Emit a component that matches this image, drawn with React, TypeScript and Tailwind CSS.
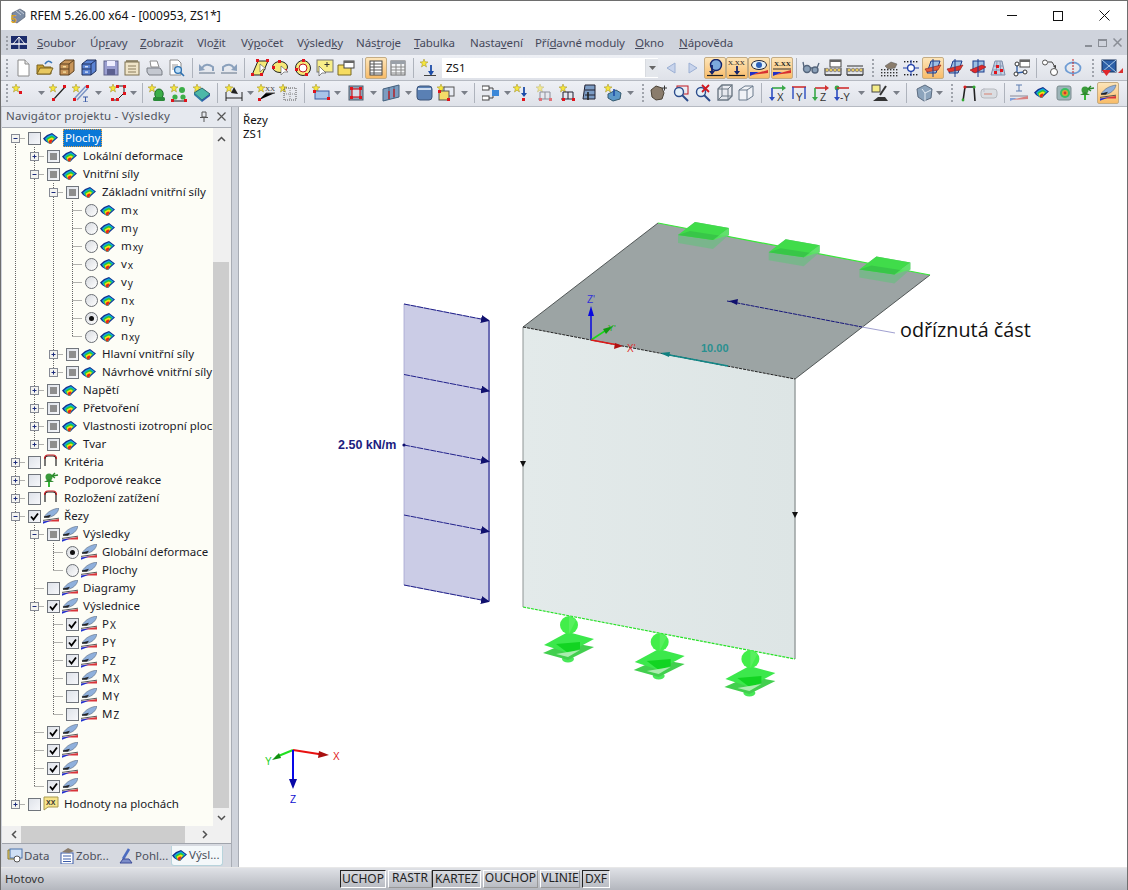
import type { ReactNode } from "react";

const font = { fontFamily: '"Noto Sans", "Open Sans", sans-serif' };

const star = <polygon points="4,0 5,2.8 8,3 5.6,4.8 6.5,8 4,6.2 1.5,8 2.4,4.8 0,3 3,2.8" fill="#f6e63a" stroke="#9a8a20" strokeWidth=".5" />;
const rd = (x: number, y: number) => <rect x={x} y={y} width="3" height="3" fill="#e0141c" />;

const rainbow = (
  <g>
    <polygon points="0,5.5 4,2 9,0 15,4.5 11,8 8,11 6,10.5 2,8" fill="#12308c" />
    <polygon points="2,5.5 5,3 9,1.2 13.6,4.6 10,7.6 8,10.6 6,10 3,7.6" fill="#10a8e0" />
    <polygon points="3.4,6 6,4 9,2.8 12.2,5 9.4,7.6 8,10.6 6,10 4,7.6" fill="#28c838" />
    <polygon points="4.6,6.8 7,5.2 9,4.4 11,5.8 9,8 8,10.6 6,10 5,8" fill="#f4e418" />
    <polygon points="5.6,8 7.5,6.8 9,6.4 9.6,7.2 8,10.6 6,10" fill="#e82818" />
  </g>
);

const section = (
  <g>
    <path d="M1 9 C5 3 10 1 16 0 C15 5 11 8.5 5 9.6 Z" fill="#8fb0dc" stroke="#5a6a80" strokeWidth=".6" />
    <path d="M1 8.6 L8 6.8 L6 9.6 L1 9.8Z" fill="#222" />
    <path d="M0 12.4 L16 10.2" stroke="#444" strokeWidth=".9" />
    <polygon points="0,13.4 16,11 16,13.4" fill="#d8343a" />
    <polygon points="0,13.4 9,12.2 0,15.8" fill="#2030d0" />
  </g>
);

const arch = <path d="M2 12 V5 Q2 2 5 2 H10 Q13 2 13 5 V12" fill="none" stroke="#222" strokeWidth="1.2" />;
const archRed = <path d="M1.5 5 Q1.5 1 5 1 H10 Q13.5 1 13.5 5" fill="none" stroke="#c81e24" strokeWidth="1.2" />;

const support = (
  <g>
    <circle cx="6" cy="5" r="3.5" fill="#3a9a3a" />
    <path d="M1 10 L11 10 L6 7Z" fill="#2f8a2f" />
    <path d="M6 10 V15" stroke="#38b838" strokeWidth="2" />
    <path d="M9 4 L15 3 M12 1 L9 4 L12 6" stroke="#2a8a2a" strokeWidth="1.3" fill="none" />
  </g>
);

const xxNote = (
  <g>
    <path d="M1 1 H15 V11 H5 L1 14 Z" fill="#f7e48a" stroke="#a89a50" />
    <text x="3" y="8.5" fontSize="7" fontFamily="Liberation Sans" fontWeight="700" fill="#333">XX</text>
  </g>
);

const frame = (c: string) => (
  <g stroke={c} fill="none" strokeWidth="1">
    <path d="M2 15 H16 M4 8 V15 M9 8 V15 M14 8 V15 M4 8 H14" />
  </g>
);

const balls = (
  <g>
    <path d="M1 16 H17" stroke="#222" strokeWidth="1.4" />
    <path d="M1 9 V16 M17 9 V16" stroke="#333" />
    {[3, 7, 11, 15].map((x) => (
      <circle key={x} cx={x} cy="11" r="1.8" fill="#e3c860" stroke="#446" strokeWidth=".5" />
    ))}
  </g>
);

const cube = (c: string) => (
  <g>
    <path d="M2 6 L8 2 H16 V12 L10 16 H2Z" fill={c} stroke="#6a7a8c" />
    <path d="M2 6 H10 V16 M10 6 L16 2" fill="none" stroke="#6a7a8c" />
  </g>
);

const axes = (l: string, a: string, b: string) => (
  <g>
    <path d="M3 4 H14" stroke={a} strokeWidth="1.6" />
    <path d="M3 4 V15" stroke={b} strokeWidth="1.6" />
    <path d="M13 1 L17 4 L13 7Z" fill={a} />
    <path d="M0 13 L3 17 L6 13Z" fill={b} />
    <text x="8" y="17" fontSize="10" fontFamily="Liberation Sans" fill="#333">{l}</text>
  </g>
);

const plane = (c: string) => (
  <g>
    <polygon points="7,2 16,2 12,14 3,14" fill="#9cc0e4" stroke="#1c3c8c" />
    <polygon points="1,10 17,6 14,11 3,13" fill={c} stroke="#8a1a1a" strokeWidth=".6" />
    <path d="M9 0 V18" stroke="#1c3c8c" />
  </g>
);

const icons: Record<string, ReactNode> = {
  new: <g><path d="M4 1 H11 L15 5 V17 H4Z" fill="#fff" stroke="#8a8a8a" /><path d="M11 1 V5 H15" fill="#e4e4e4" stroke="#8a8a8a" /></g>,
  open: <g><path d="M1 6 H7 L8 8 H15 V15 H1Z" fill="#c8a030" stroke="#7a6220" /><path d="M1 15 L4 9 H17 L14 15Z" fill="#e8c860" stroke="#7a6220" /><path d="M9 5 Q12 0 16 4" fill="none" stroke="#3c78b8" strokeWidth="1.6" /></g>,
  drawer: <g><polygon points="2,5 7,1 16,1 16,12 11,16 2,16" fill="#c8955a" stroke="#5c4020" /><path d="M2 5 H11 V16 M11 5 L16 1 M2 10 H11" fill="none" stroke="#5c4020" /><rect x="5" y="7" width="3" height="1.4" fill="#f4dc9c" /><rect x="5" y="12.4" width="3" height="1.4" fill="#f4dc9c" /></g>,
  cabinet: <g><polygon points="2,5 7,1 16,1 16,12 11,16 2,16" fill="#5c84d4" stroke="#20305c" /><path d="M2 5 H11 V16 M11 5 L16 1 M2 10 H11" fill="none" stroke="#20305c" /><rect x="5" y="7" width="3" height="1.4" fill="#d4e0f8" /><rect x="5" y="12.4" width="3" height="1.4" fill="#d4e0f8" /></g>,
  save: <g><rect x="2" y="2" width="14" height="14" fill="#9a9ed0" stroke="#60648c" /><rect x="5" y="2" width="8" height="5" fill="#eef" /><rect x="5" y="10" width="8" height="6" fill="#5c6090" /></g>,
  clip: <g><rect x="2" y="3" width="14" height="13" fill="#efe4c8" stroke="#7c7050" /><path d="M5 7 H13 M5 10 H13 M5 13 H13" stroke="#8a7c5c" /><path d="M3 2 H15" stroke="#7c7050" strokeWidth="1.5" /></g>,
  print: <g><path d="M5 2 H12 L14 8 H6Z" fill="#fff" stroke="#8c8c8c" /><path d="M2 9 H15 L17 12 V16 H4 L2 13Z" fill="#c4c8d0" stroke="#787c84" /></g>,
  preview: <g><path d="M3 1 H11 L14 4 V16 H3Z" fill="#fff" stroke="#8c8c8c" /><path d="M5 6 H11 M5 8 H9 M5 10 H8" stroke="#999" /><circle cx="11" cy="11" r="3.4" fill="#bfe0f8" stroke="#2c70b0" strokeWidth="1.3" /><path d="M13.5 13.5 L17 17" stroke="#2c70b0" strokeWidth="1.6" /></g>,
  undo: <g><path d="M4 9 Q8 3 15 8 V12" fill="none" stroke="#8aa0bc" strokeWidth="2" /><path d="M1 5 L7 11 L1 12Z" fill="#8aa0bc" /><path d="M1 14 H17" stroke="#8c98a8" strokeWidth="1.5" /></g>,
  redo: <g><path d="M14 9 Q10 3 3 8 V12" fill="none" stroke="#8aa0bc" strokeWidth="2" /><path d="M17 5 L11 11 L17 12Z" fill="#8aa0bc" /><path d="M1 14 H17" stroke="#8c98a8" strokeWidth="1.5" /></g>,
  para: <g><polygon points="7,2 17,2 11,16 1,16" fill="#f4ea78" stroke="#222" />{rd(5, 0)}{rd(15, 0)}{rd(0, 14)}{rd(9, 14)}<path d="M9 5 L9 13 L12 10 L15 10Z" fill="#fff" stroke="#555" strokeWidth=".6" /></g>,
  sel1: <g><ellipse cx="8" cy="8" rx="7.5" ry="5.5" fill="#f6e878" stroke="#222" />{rd(6, 1)}{rd(0, 7)}{rd(12, 10)}<path d="M9 7 L9 16 L12 13 L16 13Z" fill="#fff" stroke="#555" strokeWidth=".6" /></g>,
  sel2: <g><circle cx="9" cy="9" r="7.5" fill="#f6e878" stroke="#222" /><circle cx="9" cy="9" r="4" fill="#fff" stroke="#c0141c" />{rd(8, 0)}{rd(1, 9)}{rd(11, 14)}</g>,
  note: <g><rect x="1" y="1" width="16" height="12" fill="#f8ee88" stroke="#777" /><path d="M11 3 V8 M8.5 5.5 H13.5" stroke="#333" /><path d="M3 7 L3 17 L6 14 L10 14Z" fill="#fff" stroke="#555" strokeWidth=".7" /></g>,
  win: <g><path d="M1 6 H14 V16 H1Z" fill="#f6dc60" stroke="#7a6a20" /><rect x="7" y="2" width="10" height="7" fill="#fff" stroke="#444" /><rect x="7" y="2" width="10" height="2" fill="#666" /></g>,
  list1: <g><rect x="3" y="2" width="12" height="14" fill="#fff" stroke="#444" /><path d="M3 5 H15 M3 8 H15 M3 11 H15 M3 14 H15 M7 2 V16" stroke="#555" /></g>,
  list2: <g><rect x="2" y="2" width="14" height="14" fill="#f4f6f8" stroke="#666" /><rect x="2" y="2" width="14" height="3" fill="#9aa0a8" /><path d="M2 8 H16 M2 11 H16 M2 14 H16 M7 5 V16 M12 5 V16" stroke="#888" /></g>,
  stardown: <g>{star}<path d="M11 6 V14" stroke="#1c4ca8" strokeWidth="1.8" /><path d="M8 12 L11 17 L14 12Z" fill="#1c4ca8" /><path d="M4 16.5 H16" stroke="#444" /></g>,
  left: <polygon points="13,4 5,9 13,14" fill="#c8d4ec" stroke="#9cb0d4" />,
  right: <polygon points="5,4 13,9 5,14" fill="#c8d4ec" stroke="#9cb0d4" />,
  a1: <g><circle cx="10" cy="6" r="5.5" fill="#7caadc" stroke="#14246c" strokeWidth="1.4" /><path d="M1 16.5 H17" stroke="#222" strokeWidth="1.2" /><path d="M6 6 V14" stroke="#14246c" strokeWidth="1.8" /><path d="M3 12 L6 16 L9 12Z" fill="#14246c" /></g>,
  a2: <g><text x="0" y="6" fontSize="7" fontFamily="Liberation Serif" fill="#222">X.XX</text><path d="M9 7 V14" stroke="#14246c" strokeWidth="1.8" /><path d="M6 12 L9 16 L12 12Z" fill="#14246c" /><path d="M1 16.5 H17" stroke="#222" strokeWidth="1.2" /></g>,
  a3: <g><ellipse cx="9" cy="6" rx="7.5" ry="4.5" fill="#e4f0f8" stroke="#223" /><circle cx="9" cy="6" r="3" fill="#2c60b8" /><polygon points="0,16 18,11 18,14" fill="#d83030" /><polygon points="0,13 9,13 0,17" fill="#2030c8" /></g>,
  a4: <g><text x="1" y="7" fontSize="7" fontWeight="700" fontFamily="Liberation Serif" fill="#222">X.XX</text><path d="M0 10 H18" stroke="#333" /><polygon points="0,16 18,11 18,14" fill="#d83030" /><polygon points="0,13 9,13 0,17" fill="#2030c8" /></g>,
  glasses: <g><circle cx="5" cy="10" r="3.5" fill="#8aa0b8" stroke="#55657c" strokeWidth="1.4" /><circle cx="13" cy="11" r="3" fill="#8aa0b8" stroke="#55657c" strokeWidth="1.4" /><path d="M8 9 L11 9 M2 8 L1 3 M15 9 L17 4" stroke="#55657c" strokeWidth="1.3" /></g>,
  tablewin: <g>{balls}<rect x="6" y="1" width="11" height="7" fill="#fff" stroke="#444" /><rect x="6" y="1" width="11" height="2" fill="#666" /></g>,
  balls: <g>{balls}<path d="M1 7 H17" stroke="#333" /></g>,
  handdots: <g><path d="M5 7 L11 3 L17 5 L15 9 L8 10Z" fill="#8a7c6c" stroke="#555" strokeWidth=".5" />{[0, 1, 2, 3, 4, 5].map((i) => [10, 13, 16].map((y) => <rect key={i + "-" + y} x={1 + i * 3} y={y} width="1.4" height="1.4" fill="#333" />))}</g>,
  target: <g>{[2, 5, 8, 11, 14].map((x) => [2, 15].map((y) => <rect key={x + "-" + y} x={x} y={y} width="1.4" height="1.4" fill="#222" />))}<path d="M1 9 H17 M9 1 V17" stroke="#1c3ca8" /><circle cx="9" cy="9" r="3.4" fill="#fff" stroke="#1c3ca8" strokeWidth="1.3" /></g>,
  planeA: plane("#e05a3a"),
  planeB: plane("#e0342c"),
  planeC: <g><rect x="4" y="2" width="11" height="11" fill="#9cc0e4" stroke="#1c3c8c" /><polygon points="1,11 13,6 17,8 6,14" fill="#e0282c" stroke="#8a1a1a" strokeWidth=".6" /><path d="M9 0 V18" stroke="#1c3c8c" /></g>,
  gridPts: <g><polygon points="6,2 13,2 16,16 2,16" fill="#c4d0e4" stroke="#7c8ca8" /><path d="M4 7 H14 M3 11 H15 M8 2 L7 16 M11 2 L12 16" stroke="#8898b4" />{rd(7, 6)}{rd(11, 10)}{rd(5, 12)}</g>,
  nodewin: <g><rect x="8" y="1" width="10" height="7" fill="#fff" stroke="#444" /><rect x="8" y="1" width="10" height="2" fill="#666" /><path d="M5 6 V14 L12 13" fill="none" stroke="#2c5ca8" strokeWidth="1.3" /><circle cx="5" cy="5" r="2" fill="#fff" stroke="#333" /><circle cx="4" cy="15" r="2" fill="#fff" stroke="#333" /><circle cx="13" cy="13" r="2" fill="#fff" stroke="#333" /></g>,
  circles: <g><circle cx="4" cy="3.5" r="2.5" fill="#fff" stroke="#555" /><circle cx="13" cy="13" r="3.5" fill="#fff" stroke="#555" /><path d="M7 3 H11 L14 8" fill="none" stroke="#444" /><path d="M12 7 L15 10 L15 6Z" fill="#444" /></g>,
  rotate: <g><ellipse cx="9" cy="9" rx="7.5" ry="5.5" fill="none" stroke="#6e9cd4" strokeWidth="1.8" /><path d="M9 0 V18" stroke="#c02020" strokeDasharray="2 1" /></g>,
  bluebox: <g><rect x="3" y="1" width="14" height="12" fill="#2c60a8" stroke="#17305c" /><path d="M3 1 L17 13 M17 1 L3 13" stroke="#a8c8e8" /><polygon points="3,11 12,11 7.5,17" fill="#e0282c" /></g>,
  redtip: <polygon points="4,14 9,14 9,9" fill="#d83030" />,
  node: <g>{star}{rd(7, 7)}</g>,
  line: <g>{star}<path d="M4 16 L16 3" stroke="#222" strokeWidth="1.2" />{rd(3, 14)}{rd(14, 1)}</g>,
  beam: <g>{star}<path d="M2 15 L14 2 M5 16 L16 4" stroke="#7c94c4" strokeWidth="1.5" /><path d="M11 13 H16 M13.5 13 V18 M11 18 H16" stroke="#3c5ca8" />{rd(1, 14)}{rd(14, 1)}</g>,
  poly: <g>{star}<path d="M8 2 H15 V9 L8 16 H3" fill="none" stroke="#222" />{rd(7, 1)}{rd(14, 1)}{rd(14, 8)}{rd(7, 14)}{rd(2, 14)}</g>,
  dome: <g>{star}<ellipse cx="11" cy="10" rx="4.2" ry="5" fill="#3cae48" stroke="#1c6c28" /><rect x="5" y="13" width="12" height="4" rx="1.5" fill="#2a8a38" /></g>,
  domes: <g>{star}<circle cx="12" cy="6" r="3" fill="#3cae48" /><circle cx="5" cy="13" r="2.6" fill="#3cae48" /><circle cx="13" cy="13" r="2.6" fill="#3cae48" /><path d="M2 17 H17" stroke="#222" />{rd(1, 15)}{rd(14, 15)}</g>,
  plate: <g>{star}<polygon points="1,9 9,4 17,10 9,16" fill="#4cb8a8" stroke="#2c6868" /><polygon points="1,9 9,16 9,18 1,11" fill="#2c7ca8" /><polygon points="9,16 17,10 17,12 9,18" fill="#2c5ca8" /></g>,
  dim: <g>{star}<path d="M1 8 V17 M17 8 V17 M1 14 H17" stroke="#222" /><path d="M9 3 L13 10 L6 9Z" fill="#222" /></g>,
  xx: <g>{star}<path d="M2 16 L9 9 H18" stroke="#555" /><text x="8" y="7" fontSize="7" fontFamily="Liberation Serif" fill="#444">XX</text>{rd(1, 14)}</g>,
  gridstar: <g>{star}<rect x="5" y="4" width="12" height="12" fill="none" stroke="#555" strokeDasharray="1 1" /><path d="M11 4 V16 M5 10 H17" stroke="#888" strokeDasharray="1 1" /></g>,
  rect: <g>{star}<rect x="3" y="7" width="14" height="8" fill="#a8c4e8" stroke="#3c5ca0" />{rd(1, 6)}{rd(15, 13)}</g>,
  box: <g><rect x="2" y="2" width="14" height="14" fill="#8ca4b8" stroke="#4c5c6c" /><rect x="5" y="5" width="8" height="8" fill="#d4dce8" stroke="#d01820" strokeWidth="1.2" />{rd(3, 3)}{rd(12, 3)}{rd(3, 12)}{rd(12, 12)}</g>,
  struct: <g><polygon points="1,5 17,1 17,13 1,17" fill="#7c9cc0" stroke="#44607c" /><path d="M7 3 V15 M12 2 V14" stroke="#44607c" /><path d="M7 7 V15 M12 5 V13" stroke="#c82024" strokeWidth="1.3" /></g>,
  cubeBlue: <g><path d="M2 5 Q2 2 5 2 H14 Q17 2 17 5 V13 Q17 16 14 16 H5 Q2 16 2 13Z" fill="#5a80b4" stroke="#3c5478" /><path d="M3 5 H16" stroke="#d0def0" strokeWidth="2" /></g>,
  cube2: <g>{star}<rect x="7" y="3" width="10" height="9" fill="#e8ecf4" stroke="#555" /><rect x="2" y="7" width="10" height="9" fill="#f4dc68" stroke="#555" />{rd(1, 6)}{rd(10, 14)}</g>,
  flow: <g><rect x="0" y="2" width="7" height="4" fill="#fff" stroke="#444" /><rect x="0" y="12" width="7" height="4" fill="#fff" stroke="#444" /><path d="M7 4 H11 V7 M7 14 H11 V11" stroke="#444" fill="none" /><rect x="10" y="6" width="7" height="6" fill="#3c88d8" /></g>,
  stardownRed: <g>{star}<path d="M11 3 V11" stroke="#1c4ca8" strokeWidth="1.8" /><path d="M8 9 L11 13 L14 9Z" fill="#1c4ca8" />{rd(9, 14)}</g>,
  framePale: <g opacity=".55">{star}{frame("#445")}{rd(3, 14)}{rd(13, 14)}</g>,
  frameStar: <g>{star}{frame("#223")}{rd(3, 14)}{rd(13, 14)}</g>,
  frameDark: <g><path d="M5 1 H15 V15 H3Z" fill="#7c9cc4" stroke="#223" /><path d="M5 6 H15 M5 11 H15" stroke="#223" /><path d="M8 8 V16" stroke="#222" strokeWidth="1.6" /></g>,
  boxStar: <g>{star}<polygon points="4,10 12,6 17,9 16,15 9,17 4,14" fill="#5c98c8" stroke="#34586c" /><path d="M10 5 V12" stroke="#1c4ca8" strokeWidth="1.6" /></g>,
  hand: <g><path d="M2 6 L7 2 L13 4 L15 9 L13 15 L7 16 L3 13Z" fill="#8a7c6c" stroke="#4c4438" /><path d="M13 4 H18 M15.5 1.5 V6.5" stroke="#333" /></g>,
  zoomPlus: <g><rect x="5" y="2" width="11" height="8" fill="none" stroke="#c01820" /><circle cx="7" cy="8" r="4.5" fill="#e4f0f8" stroke="#2c4c8c" strokeWidth="1.4" /><path d="M10 11 L16 17" stroke="#2c4c8c" strokeWidth="2" /></g>,
  zoomX: <g><circle cx="7" cy="8" r="4.5" fill="#e4f0f8" stroke="#2c4c8c" strokeWidth="1.4" /><path d="M10 11 L16 17" stroke="#2c4c8c" strokeWidth="2" /><path d="M8 1 L15 8 M15 1 L8 8" stroke="#d01820" strokeWidth="1.8" /></g>,
  wire: <g fill="none" stroke="#6c7884"><path d="M2 5 L6 1 H16 V12 L12 16 H2Z" strokeWidth="1.4" /><path d="M6 1 V12 H16 M6 12 L2 16 M2 5 H12 V16 M12 5 L16 1" /></g>,
  iso: cube("#f0f2f6"),
  ax: axes("X", "#38a848", "#2c4cc0"),
  ay: <g><path d="M2 3 H16" stroke="#d03030" strokeWidth="1.6" /><path d="M3 3 V15 M15 3 V15" stroke="#2c4cc0" strokeWidth="1.4" /><text x="6" y="17" fontSize="10" fontFamily="Liberation Sans" fill="#333">Y</text></g>,
  az: axes("Z", "#d03030", "#38a848"),
  amy: <g><circle cx="3" cy="4" r="2.4" fill="#38a848" /><path d="M3 4 H15" stroke="#d03030" strokeWidth="1.6" /><path d="M3 5 V15" stroke="#2c4cc0" strokeWidth="1.6" /><path d="M0 13 L3 17 L6 13Z" fill="#2c4cc0" /><text x="6" y="17" fontSize="10" fontFamily="Liberation Sans" fill="#333">-Y</text></g>,
  scope: <g><rect x="1" y="1" width="8" height="7" fill="#f4ec88" stroke="#444" /><path d="M15 2 L9 11" stroke="#333" strokeWidth="2" /><path d="M2 17 H17 L14 13 H7Z" fill="#333" /></g>,
  solid: <g><polygon points="2,5 10,1 17,5 16,14 9,17 3,13" fill="#8ca4bc" stroke="#5c6c80" /><path d="M7 5 L10 9 L16 6 M10 9 V17" fill="none" stroke="#e4ecf4" /></g>,
  framebw: <g><path d="M4 17 L6 3 H15 L16 17" fill="none" stroke="#222" strokeWidth="1.6" /><circle cx="6" cy="3" r="1.6" fill="#d82020" /><circle cx="15" cy="3" r="1.6" fill="#30a830" /><circle cx="4" cy="16" r="1.4" fill="#30a830" /></g>,
  pill: <g opacity=".65"><rect x="1" y="5" width="16" height="9" rx="3" fill="#d4d8dc" stroke="#9ca0a4" /><path d="M4 10 H12" stroke="#d08070" strokeWidth="1.6" /><path d="M4 4 V8" stroke="#aab" /></g>,
  ibeam: <g><path d="M6 1 H12 M9 1 V7 M6 7 H12" stroke="#5c7cb0" /><path d="M0 12 H18" stroke="#889" /><polygon points="0,16 18,12 18,15" fill="#d88080" /><polygon points="0,14 7,14 0,17" fill="#80a0d8" /></g>,
  rainbow: <g transform="translate(1 3)">{rainbow}</g>,
  cubeRainbow: <g><rect x="2" y="2" width="14" height="14" rx="2" fill="#9cb4b8" stroke="#7c8c90" /><circle cx="10" cy="9" r="5" fill="#38c060" /><circle cx="10" cy="9" r="3" fill="#e0a030" /><circle cx="10" cy="9" r="1.4" fill="#d83030" /></g>,
  support: <g transform="translate(2 1)">{support}</g>,
  section: <g transform="translate(1 1)">{section}</g>,
};

type Item = [number, string, boolean?];

const row1: Item[] = [
  [6, "grip"], [22, "new"], [44, "open"], [66, "drawer"], [88, "cabinet"], [110, "save"], [131, "clip"], [153, "print"], [175, "preview"],
  [191, "sep"], [206, "undo"], [228, "redo"], [243, "sep"], [259, "para"], [280, "sel1"], [302, "sel2"], [324, "note"], [345, "win"], [361, "sep"],
  [375, "list1", true], [397, "list2"], [412, "sep"], [428, "stardown"], [549, "combo"], [670, "left"], [692, "right"],
  [714, "a1", true], [736, "a2", true], [758, "a3", true], [781, "a4", true], [795, "sep"], [810, "glasses"], [832, "tablewin"], [854, "balls"],
  [872, "grip"], [888, "handdots"], [910, "target"], [932, "planeA", true], [954, "planeB"], [977, "planeC"], [997, "gridPts"], [1020, "nodewin"],
  [1035, "sep"], [1049, "circles"], [1072, "rotate"], [1092, "grip"], [1107, "bluebox"], [1122, "redtip"],
];

const row2: Item[] = [
  [6, "grip"], [20, "node"], [40, "drop"], [57, "line"], [80, "beam"], [97, "drop"], [117, "poly"], [132, "drop"], [141, "sep"],
  [156, "dome"], [178, "domes"], [201, "plate"], [216, "sep"], [233, "dim"], [249, "drop"], [265, "xx"], [287, "gridstar"], [303, "sep"],
  [320, "rect"], [336, "drop"], [355, "box"], [372, "drop"], [390, "struct"], [407, "drop"], [423, "cubeBlue"], [445, "cube2"], [463, "drop"], [473, "sep"],
  [490, "flow"], [506, "drop"], [521, "stardownRed"], [544, "framePale"], [567, "frameStar"], [588, "frameDark"], [612, "boxStar"], [629, "drop"], [642, "grip"],
  [657, "hand"], [680, "zoomPlus"], [702, "zoomX"], [724, "wire"], [745, "iso"], [760, "sep"], [777, "ax"], [798, "ay"], [820, "az"], [842, "amy"], [860, "drop"],
  [879, "scope"], [895, "drop"], [905, "sep"], [923, "solid"], [938, "drop"], [951, "grip"], [967, "framebw"], [988, "pill"], [1003, "sep"],
  [1018, "ibeam"], [1041, "rainbow"], [1063, "cubeRainbow"], [1085, "support"], [1107, "section", true],
];

const widthOf = (kind: string) => {
  if (kind === "sep") return 1;
  if (kind === "drop") return 7;
  if (kind === "grip") return 3;
  if (kind === "combo") return 216;
  return 22;
};

const ToolItem = ({ kind, active }: { kind: string; active?: boolean }) => {
  if (kind === "sep") return <div className="h-[20px] w-px bg-[#aeb3bc]" />;
  if (kind === "drop") {
    return (
      <svg width="7" height="4" viewBox="0 0 7 4">
        <polygon points="0,0 7,0 3.5,4" fill="#7a7f88" />
      </svg>
    );
  }
  if (kind === "grip") {
    return (
      <div className="flex h-[18px] w-[3px] flex-col justify-between">
        {[0, 1, 2, 3, 4].map((i) => (
          <div key={i} className="h-[2px] w-[2px] bg-[#a0a4ac]" />
        ))}
      </div>
    );
  }
  if (kind === "combo") {
    return (
      <div className="flex h-[20px] w-[216px] items-center bg-white">
        <span className="flex-1 pl-[4px] text-[11.5px] text-[#111]">ZS1</span>
        <div className="flex h-[18px] w-[13px] items-center justify-center border-l border-[#d8dbe0] bg-[#e4e7ec]">
          <svg width="7" height="4" viewBox="0 0 7 4">
            <polygon points="0,0 7,0 3.5,4" fill="#666" />
          </svg>
        </div>
      </div>
    );
  }
  return (
    <div
      className={
        active
          ? "flex h-[22px] w-[22px] items-center justify-center rounded-[2px] border border-[#c4ac84] bg-linear-to-b from-[#fde5b8] to-[#f8bc68]"
          : "flex h-[22px] w-[22px] items-center justify-center"
      }
    >
      <svg width="18" height="18" viewBox="0 0 18 18">
        {icons[kind]}
      </svg>
    </div>
  );
};

const Toolbar = ({ items, lift }: { items: Item[]; lift?: boolean }) => {
  let right = 0;
  return (
    <div
      className={
        lift
          ? "flex h-[26px] shrink-0 items-center overflow-hidden border-b border-[#b6bac2] bg-linear-to-b from-[#eef0f5] to-[#dfe2e9] pb-[2px]"
          : "flex h-[26px] shrink-0 items-center overflow-hidden border-b border-[#b6bac2] bg-linear-to-b from-[#eef0f5] to-[#dfe2e9]"
      }
    >
      {items.map(([x, kind, active], i) => {
        const w = widthOf(kind);
        const gap = x - w / 2 - right;
        right = x + w / 2;
        return (
          <div key={i} className="shrink-0" style={{ marginLeft: gap }}>
            <ToolItem kind={kind} active={active} />
          </div>
        );
      })}
    </div>
  );
};

const menus: [string, string, string, number][] = [
  ["", "S", "oubor", 37],
  ["Úp", "r", "avy", 90],
  ["", "Z", "obrazit", 140],
  ["Vlo", "ž", "it", 197],
  ["Vý", "p", "očet", 241],
  ["Výsled", "k", "y", 297],
  ["Nás", "t", "roje", 356],
  ["", "T", "abulka", 414],
  ["Nasta", "v", "ení", 470],
  ["Pří", "d", "avné moduly", 535],
  ["", "O", "kno", 635],
  ["", "N", "ápověda", 679],
];

const Check = ({ state }: { state: "off" | "mixed" | "on" }) => (
  <div className="flex h-[13px] w-[13px] shrink-0 items-center justify-center border border-[#70757c] bg-linear-to-br from-[#dfe3ea] to-[#f6f7fa]">
    {state === "mixed" && <div className="h-[7px] w-[7px] bg-[#8e8e8e]" />}
    {state === "on" && (
      <svg width="11" height="11" viewBox="0 0 11 11">
        <path d="M2 5.5 L4.5 8.5 L9 2.5" fill="none" stroke="#000" strokeWidth="1.8" />
      </svg>
    )}
  </div>
);

const Radio = ({ on }: { on?: boolean }) => (
  <div className="flex h-[13px] w-[13px] shrink-0 items-center justify-center rounded-full border border-[#6a6e74] bg-linear-to-br from-[#d8dbe0] to-white">
    {on && <div className="h-[5px] w-[5px] rounded-full bg-[#111]" />}
  </div>
);

const Connector = ({ type, first, last }: { type: "plus" | "minus" | "tee"; first?: boolean; last?: boolean }) => (
  <svg width="19" height="18" viewBox="0 0 19 18" className="shrink-0">
    <path d={`M9.5 ${first ? 9 : 0} V${last ? 9 : 18}`} stroke="#666" strokeDasharray="1 1" />
    <path d="M9.5 9.5 H19" stroke="#666" strokeDasharray="1 1" />
    {type !== "tee" && (
      <g>
        <rect x="5.5" y="5.5" width="8" height="8" fill="#f4f4f0" stroke="#868a94" />
        <path d="M7.5 9.5 H11.5" stroke="#1c2c7c" />
        {type === "plus" && <path d="M9.5 7.5 V11.5" stroke="#1c2c7c" />}
      </g>
    )}
  </svg>
);

const Guide = ({ on }: { on: boolean }) => (
  <svg width="19" height="18" viewBox="0 0 19 18" className="shrink-0">
    {on && <path d="M9.5 0 V18" stroke="#666" strokeDasharray="1 1" />}
  </svg>
);

type Row = {
  g: string;
  c: "plus" | "minus" | "tee";
  last?: boolean;
  first?: boolean;
  box: "off" | "mixed" | "on" | "radio" | "radioOn";
  ic: ReactNode;
  t?: string;
  sub?: string;
  sel?: boolean;
};

const surf = <g transform="translate(0 3)">{rainbow}</g>;
const cut = <g>{section}</g>;
const archIcon = <g>{arch}{archRed}</g>;
const sup = <g>{support}</g>;
const note = <g>{xxNote}</g>;

const rows: Row[] = [
  { g: "", c: "minus", first: true, box: "off", ic: surf, t: "Plochy", sel: true },
  { g: "1", c: "plus", box: "mixed", ic: surf, t: "Lokální deformace" },
  { g: "1", c: "minus", box: "mixed", ic: surf, t: "Vnitřní síly" },
  { g: "11", c: "minus", box: "mixed", ic: surf, t: "Základní vnitřní síly" },
  { g: "111", c: "tee", box: "radio", ic: surf, t: "m", sub: "x" },
  { g: "111", c: "tee", box: "radio", ic: surf, t: "m", sub: "y" },
  { g: "111", c: "tee", box: "radio", ic: surf, t: "m", sub: "xy" },
  { g: "111", c: "tee", box: "radio", ic: surf, t: "v", sub: "x" },
  { g: "111", c: "tee", box: "radio", ic: surf, t: "v", sub: "y" },
  { g: "111", c: "tee", box: "radio", ic: surf, t: "n", sub: "x" },
  { g: "111", c: "tee", box: "radioOn", ic: surf, t: "n", sub: "y" },
  { g: "111", c: "tee", last: true, box: "radio", ic: surf, t: "n", sub: "xy" },
  { g: "11", c: "plus", box: "mixed", ic: surf, t: "Hlavní vnitřní síly" },
  { g: "11", c: "plus", last: true, box: "mixed", ic: surf, t: "Návrhové vnitřní síly" },
  { g: "1", c: "plus", box: "mixed", ic: surf, t: "Napětí" },
  { g: "1", c: "plus", box: "mixed", ic: surf, t: "Přetvoření" },
  { g: "1", c: "plus", box: "mixed", ic: surf, t: "Vlastnosti izotropní plochy" },
  { g: "1", c: "plus", last: true, box: "mixed", ic: surf, t: "Tvar" },
  { g: "", c: "plus", box: "off", ic: archIcon, t: "Kritéria" },
  { g: "", c: "plus", box: "off", ic: sup, t: "Podporové reakce" },
  { g: "", c: "plus", box: "off", ic: archIcon, t: "Rozložení zatížení" },
  { g: "", c: "minus", box: "on", ic: cut, t: "Řezy" },
  { g: "1", c: "minus", box: "mixed", ic: cut, t: "Výsledky" },
  { g: "11", c: "tee", box: "radioOn", ic: cut, t: "Globální deformace" },
  { g: "11", c: "tee", last: true, box: "radio", ic: cut, t: "Plochy" },
  { g: "1", c: "tee", box: "off", ic: cut, t: "Diagramy" },
  { g: "1", c: "minus", box: "on", ic: cut, t: "Výslednice" },
  { g: "11", c: "tee", box: "on", ic: cut, t: "P", sub: "X" },
  { g: "11", c: "tee", box: "on", ic: cut, t: "P", sub: "Y" },
  { g: "11", c: "tee", box: "on", ic: cut, t: "P", sub: "Z" },
  { g: "11", c: "tee", box: "off", ic: cut, t: "M", sub: "X" },
  { g: "11", c: "tee", box: "off", ic: cut, t: "M", sub: "Y" },
  { g: "11", c: "tee", last: true, box: "off", ic: cut, t: "M", sub: "Z" },
  { g: "1", c: "tee", box: "on", ic: cut },
  { g: "1", c: "tee", box: "on", ic: cut },
  { g: "1", c: "tee", box: "on", ic: cut },
  { g: "1", c: "tee", last: true, box: "on", ic: cut },
  { g: "", c: "plus", last: true, box: "off", ic: note, t: "Hodnoty na plochách" },
];

const TreeRow = ({ row }: { row: Row }) => (
  <div className="flex h-[18px] items-center whitespace-nowrap">
    {row.g.split("").map((v, i) => (
      <Guide key={i} on={v === "1"} />
    ))}
    <Connector type={row.c} first={row.first} last={row.last} />
    <div className="ml-[3px] flex items-center">
      {row.box === "radio" || row.box === "radioOn" ? <Radio on={row.box === "radioOn"} /> : <Check state={row.box} />}
    </div>
    <svg width="16" height="16" viewBox="0 0 16 16" className="ml-[2px] shrink-0">
      {row.ic}
    </svg>
    {row.t && (
      <span
        className={
          row.sel
            ? "ml-[4px] border border-dotted border-[#e8a040] bg-[#0a78d7] px-[1px] text-[11.5px] leading-[16px] text-white"
            : "ml-[5px] text-[11.5px] leading-[16px] text-[#1a1a26]"
        }
      >
        {row.t}
        {row.sub && <span className="ml-[1px] align-[-1px] text-[10px]">{row.sub}</span>}
      </span>
    )}
  </div>
);

const tabs = [
  { t: "Data", w: "w-[52px]", s: <g><path d="M1 2 H9 V11 H1Z" fill="#f4d468" stroke="#8a7a30" /><rect x="3" y="1" width="12" height="9" fill="#cfe0f4" stroke="#4c74ac" /><circle cx="10" cy="11" r="3" fill="#fff" stroke="#555" /></g> },
  { t: "Zobr...", w: "w-[59px]", s: <g><rect x="2" y="5" width="12" height="11" fill="#fff" stroke="#3c5ca8" /><path d="M4 8 H12 M4 11 H12 M4 13.5 H12" stroke="#3c5ca8" /><path d="M3 4 L9 0 L15 3 L10 5Z" fill="#8a7c6c" /></g> },
  { t: "Pohl...", w: "w-[54px]", s: <g><path d="M11 1 L5 11" stroke="#4c6cc0" strokeWidth="2.6" /><path d="M2 15 H14 L11 11 H5Z" fill="#7c8cc8" stroke="#3c4c98" /></g> },
];

const Scene = () => (
  <svg viewBox="239 107 889 759" width="889" height="759" className="block">
    <defs>
      <marker id="navy" markerWidth="9" markerHeight="8" refX="8" refY="4" orient="auto" markerUnits="userSpaceOnUse">
        <polygon points="0,0 9,4 0,8" fill="#10106e" />
      </marker>
      <linearGradient id="face" x1="0" x2="1" y1="0" y2="0">
        <stop offset="0" stopColor="#e3eaea" />
        <stop offset="1" stopColor="#dde5e5" />
      </linearGradient>
    </defs>

    <polygon points="404,304 489,321 489,601 404,585" fill="#cbcce6" stroke="#a4a6d0" strokeWidth=".8" />
    <path d="M489 321 V601" stroke="#6b6cb4" strokeWidth="2" />
    {[304, 374.5, 445, 515, 585].map((y) => (
      <path key={y} d={`M404 ${y} L489 ${y + 16.5}`} stroke="#20208a" strokeWidth="1" strokeDasharray="6 .7" markerEnd="url(#navy)" />
    ))}
    <circle cx="404" cy="445" r="1.6" fill="#10106e" />
    <text x="338" y="449" fontSize="12.5" fontWeight="700" fontFamily="Liberation Sans" fill="#1c1c80">2.50 kN/m</text>

    <polygon points="523,327 795,379 795,659 523,607" fill="url(#face)" />
    <path d="M523 327 V607" stroke="#8e9494" strokeWidth="1" />
    <path d="M795 379 V659" stroke="#9aa0a0" strokeWidth="1.5" />
    <polygon points="658,223 930,275 795,379 523,327" fill="#9ca4a4" />
    <path d="M658 223 L523 327 M930 275 L795 379" stroke="#444a4a" strokeWidth=".9" />
    <path d="M523 327 L795 379" stroke="#222" strokeWidth="1" strokeDasharray="3 1" />
    <path d="M658 223 L930 275" stroke="#38e838" strokeWidth="1.2" />
    <path d="M523 607 L795 659" stroke="#28e028" strokeWidth="1.2" strokeDasharray="3 1" />
    <polygon points="520,461 526,461 523,467" fill="#111" />
    <polygon points="792,512 798,512 795,518" fill="#111" />

    {[0, 1, 2].map((i) => (
      <g key={i} transform={`translate(${i * 90.7} ${i * 17.3})`}>
        <polygon points="678,235 695,222 729,228 729,235 713,249 678,243" fill="#74b888" opacity=".85" />
        <polygon points="695,222 729,228 713,240 678,235" fill="#40dc4a" />
        <polygon points="690,231 722,236 713,240 678,235" fill="#38c648" />
        <path d="M729 228 V235 L713 240" fill="#58e860" opacity=".8" />
      </g>
    ))}

    <path d="M727 301 L862 327" stroke="#14147a" strokeWidth="1" strokeDasharray="4 .8" />
    <path d="M862 327 L895 333" stroke="#a0a0d0" strokeWidth="1" />
    <polygon points="729,301 738,299 737,305" fill="#10106e" />

    <path d="M591 340 V312" stroke="#0808e0" strokeWidth="1.5" />
    <polygon points="591,306 594,316 588,316" fill="#0808e0" />
    <text x="587" y="303" fontSize="10" fontFamily="Liberation Sans" fill="#3030d8">Z'</text>
    <path d="M591 340 L608 329" stroke="#18d818" strokeWidth="1.5" />
    <polygon points="613,326 606,334 603,329" fill="#109a10" />
    <text x="608" y="331" fontSize="9" fontFamily="Liberation Sans" fill="#18b018">Y'</text>
    <path d="M591 340 L618 345" stroke="#e01818" strokeWidth="1.6" />
    <polygon points="623,346 614,349 615,343" fill="#b01010" />
    <text x="627" y="352" fontSize="10" fontFamily="Liberation Sans" fill="#e03030">X'</text>

    <path d="M728 366 L664 354" stroke="#108888" strokeWidth="1.4" />
    <polygon points="660,353 670,352 669,357" fill="#108080" />
    <text x="701" y="352" fontSize="11" fontWeight="700" fontFamily="Liberation Sans" fill="#2a9090">10.00</text>

    <text x="900" y="337" fontSize="19.8" fontFamily="Open Sans" fill="#111">odříznutá část</text>

    {[0, 1, 2].map((i) => (
      <g key={i} transform={`translate(${i * 90.7} ${i * 17})`}>
        <ellipse cx="568" cy="659" rx="6" ry="3.5" fill="#48e858" />
        <polygon points="543,653 568,642 594,647 568,660" fill="#42cf4e" />
        <polygon points="544,645 568,632 594,639 568,653" fill="#3ce84c" />
        <polygon points="556,644 580,642 580,649 568,653" fill="#12d422" />
        <path d="M556 654 L580 650 L568 657Z" fill="#d8f8d8" opacity=".7" />
        <circle cx="569" cy="625" r="9" fill="#42ee4a" />
        <path d="M569 616 V634 L576 620" fill="#58f05e" />
      </g>
    ))}

    <path d="M293 750 L325 755" stroke="#e81010" strokeWidth="2" />
    <polygon points="329,755 318,758 319,751" fill="#a81010" />
    <text x="333" y="760" fontSize="10" fontFamily="Liberation Sans" fill="#e02020">X</text>
    <path d="M293 750 L276 757" stroke="#20e020" strokeWidth="2" />
    <polygon points="272,760 279,753 281,758" fill="#109010" />
    <text x="265" y="765" fontSize="10" fontFamily="Liberation Sans" fill="#20d020">Y</text>
    <path d="M293 750 V782" stroke="#0808e8" strokeWidth="2" />
    <polygon points="293,789 289,779 297,779" fill="#0808a8" />
    <text x="290" y="803" fontSize="10" fontFamily="Liberation Sans" fill="#1010d0">Z</text>
  </svg>
);

const status: [string, string, boolean][] = [
  ["UCHOP", "w-[46px]", true],
  ["RASTR", "ml-[2px] w-[44px]", false],
  ["KARTEZ", "w-[49px]", true],
  ["OUCHOP", "ml-[2px] w-[55px]", false],
  ["VLINIE", "ml-[2px] w-[40px]", false],
  ["DXF", "ml-[2px] w-[28px]", true],
];

export default function App() {
  return (
    <div style={font} className="flex h-[890px] w-[1128px] flex-col overflow-hidden border-x border-t border-[#6e6e6e] bg-[#cfd3db]">
      <div className="flex h-[29px] shrink-0 items-center bg-white">
        <svg width="16" height="16" viewBox="0 0 16 16" className="ml-[9px]">
          <polygon points="2,5 10,1 15,4 15,9 7,15 2,13" fill="#7c8ca4" stroke="#4c5464" strokeWidth=".6" />
          <path d="M6 3 L11 7 M9 2 L14 6" stroke="#c4ccd8" />
          <text x="1" y="15" fontSize="10" fontWeight="700" fontFamily="Liberation Sans" fill="#d8a020">5</text>
        </svg>
        <span className="ml-[4px] text-[12px] text-[#111]">RFEM 5.26.00 x64 - [000953, ZS1*]</span>
        <div className="ml-auto flex items-center">
          <div className="flex h-[29px] w-[46px] items-center justify-center">
            <div className="h-px w-[10px] bg-[#111]" />
          </div>
          <div className="flex h-[29px] w-[46px] items-center justify-center">
            <div className="h-[10px] w-[10px] border border-[#111]" />
          </div>
          <div className="flex h-[29px] w-[46px] items-center justify-center">
            <svg width="11" height="11" viewBox="0 0 11 11">
              <path d="M.5 .5 L10.5 10.5 M10.5 .5 L.5 10.5" stroke="#111" />
            </svg>
          </div>
        </div>
      </div>

      <div className="flex h-[25px] shrink-0 items-center bg-[#cfd3dc]">
        <div className="ml-[5px] h-[14px] w-[3px] border-l-2 border-dotted border-[#9a9ea6]" />
        <svg width="16" height="13" viewBox="0 0 16 13" className="ml-[2px]">
          <rect width="16" height="13" fill="#1c2c6c" />
          <path d="M0 8 H16" stroke="#fff" strokeWidth="1.5" />
          <path d="M8 1 L2 8 M8 1 L14 8 M8 1 V13" stroke="#fff" />
        </svg>
        <div className="ml-[10px] flex text-[11.5px] tracking-[-.1px] text-[#45485a]">
          {menus.map(([a, u, b, x], i) => (
            <span key={i} className="shrink-0 whitespace-nowrap" style={{ width: i + 1 < menus.length ? menus[i + 1][3] - x : undefined }}>
              {a}
              <span className="underline">{u}</span>
              {b}
            </span>
          ))}
        </div>
        <div className="ml-auto mr-[5px] flex items-center gap-[6px]">
          <div className="mt-[6px] h-[2px] w-[7px] bg-[#8a8e96]" />
          <div className="h-[8px] w-[9px] border border-t-2 border-[#8a8e96]" />
          <svg width="9" height="9" viewBox="0 0 9 9">
            <path d="M.5 .5 L8.5 8.5 M8.5 .5 L.5 8.5" stroke="#8a8e96" strokeWidth="1.5" />
          </svg>
        </div>
      </div>

      <Toolbar items={row1} />
      <Toolbar items={row2} lift />

      <div className="flex min-h-0 flex-1 bg-[#cfd3db]">
        <div className="ml-[1px] flex w-[230px] shrink-0 flex-col border-r border-[#a8acb4]">
          <div className="flex h-[20px] shrink-0 items-center bg-[#e6e9ef] pb-[2px] pl-[4px] pr-[5px]">
            <span className="text-[11.5px] tracking-[.2px] text-[#50545e]">Navigátor projektu - Výsledky</span>
            <svg width="10" height="11" viewBox="0 0 10 11" className="ml-auto">
              <path d="M3 1 H7 V6 H3Z M1 6.5 H9 M5 7 V11" fill="none" stroke="#555" />
            </svg>
            <svg width="9" height="9" viewBox="0 0 9 9" className="ml-[8px]">
              <path d="M.5 .5 L8.5 8.5 M8.5 .5 L.5 8.5" stroke="#555" strokeWidth="1.2" />
            </svg>
          </div>
          <div className="flex min-h-0 flex-1 flex-col border-t border-[#a8acb4] bg-[#f0f0f0]">
            <div className="flex min-h-0 flex-1">
              <div className="w-[211px] shrink-0 overflow-hidden bg-[#fdfdf6] pl-[4px] pt-[1px]">
                {rows.map((r, i) => (
                  <TreeRow key={i} row={r} />
                ))}
              </div>
              <div className="flex w-[16px] flex-col items-center bg-[#f0f0f0]">
                <svg width="9" height="6" viewBox="0 0 9 6" className="mt-[8px]">
                  <path d="M1 5 L4.5 1.5 L8 5" fill="none" stroke="#505050" strokeWidth="1.5" />
                </svg>
                <div className="mt-[120px] h-[546px] w-full bg-[#cdcdcd]" />
                <svg width="9" height="6" viewBox="0 0 9 6" className="mt-[7px]">
                  <path d="M1 1 L4.5 4.5 L8 1" fill="none" stroke="#505050" strokeWidth="1.5" />
                </svg>
              </div>
            </div>
            <div className="flex h-[17px] shrink-0 items-center bg-[#f0f0f0]">
              <svg width="6" height="9" viewBox="0 0 6 9" className="ml-[9px]">
                <path d="M5 1 L1.5 4.5 L5 8" fill="none" stroke="#505050" strokeWidth="1.5" />
              </svg>
              <div className="ml-[4px] h-full w-[164px] bg-[#cdcdcd]" />
              <svg width="6" height="9" viewBox="0 0 6 9" className="ml-[17px]">
                <path d="M1 1 L4.5 4.5 L1 8" fill="none" stroke="#505050" strokeWidth="1.5" />
              </svg>
            </div>
          </div>
          <div className="flex h-[24px] shrink-0 items-center border-t border-[#a0a4ac] bg-[#d6d9e0] pl-[5px] text-[11.5px] text-[#4c505c]">
            {tabs.map((tab) => (
              <div key={tab.t} className={`flex items-center gap-[1px] ${tab.w}`}>
                <svg width="16" height="16" viewBox="0 0 16 16">
                  {tab.s}
                </svg>
                <span>{tab.t}</span>
              </div>
            ))}
            <div className="ml-[-1px] flex h-[20px] w-[52px] items-center gap-[1px] rounded-b-[3px] border border-t-0 border-[#b8d4dc] bg-[#f4f8fa]">
              <svg width="16" height="16" viewBox="0 0 16 16">
                {surf}
              </svg>
              <span>Výsl...</span>
            </div>
          </div>
        </div>

        <div className="ml-[6px] flex min-w-0 flex-1 flex-col border-l border-[#a8acb4] bg-white">
          <div className="relative h-full overflow-hidden">
            <div className="absolute left-[4px] top-[6px] text-[11.5px] leading-[14px] text-[#111]">
              <div>Řezy</div>
              <div>ZS1</div>
            </div>
            <Scene />
          </div>
        </div>
      </div>

      <div className="flex h-[23px] shrink-0 items-center border-t border-[#e8e8e8] bg-linear-to-b from-[#dfe1e6] to-[#b4b7be]">
        <span className="ml-[4px] w-[335px] text-[11.5px] text-[#333]">Hotovo</span>
        {status.map(([t, w, pressed]) => (
          <div
            key={t}
            className={
              pressed
                ? `flex h-[18px] ${w} items-center justify-center border border-b-white border-l-[#222] border-r-white border-t-[#222] text-[12px] text-[#222]`
                : `flex h-[18px] ${w} items-center justify-center border border-b-[#999] border-l-white border-r-[#999] border-t-white pb-[2px] text-[12px] text-[#222]`
            }
          >
            {t}
          </div>
        ))}
      </div>
    </div>
  );
}
